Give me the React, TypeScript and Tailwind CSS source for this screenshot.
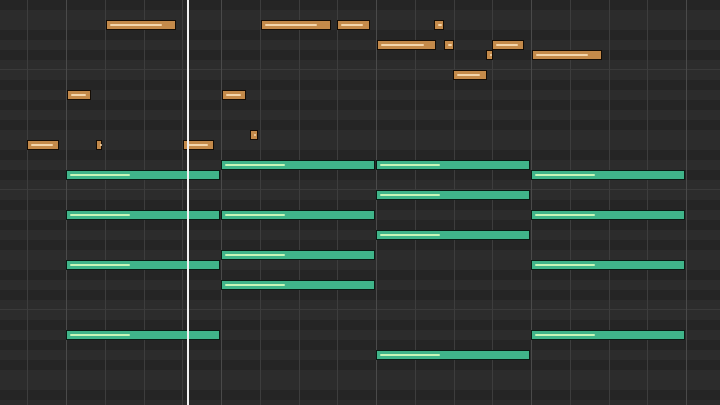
const BEAT = 38.75;
const X0 = 27.8;

type Note = { x: number; y: number; w: number };

// orange (melody) notes, pixel coords
const leads: Note[] = [
  { x: 105.5, y: 20, w: 70.5 },
  { x: 260.8, y: 20, w: 70 },
  { x: 337.3, y: 20, w: 32.5 },
  { x: 434.3, y: 20, w: 9.5 },
  { x: 376.5, y: 40, w: 59.3 },
  { x: 444.3, y: 40, w: 9.4 },
  { x: 492.3, y: 40, w: 32 },
  { x: 485.7, y: 50, w: 7 },
  { x: 531.7, y: 50, w: 70 },
  { x: 453.3, y: 70, w: 33.4 },
  { x: 66.7, y: 90, w: 24 },
  { x: 221.7, y: 90, w: 24 },
  { x: 250, y: 130, w: 7.5 },
  { x: 27.3, y: 140, w: 32 },
  { x: 95.7, y: 140, w: 6.8 },
  { x: 182.7, y: 140, w: 31.8 },
];

// green (chord) notes: [bar, row y]
const chords: [number, number][] = [
  [0, 170], [0, 210], [0, 260], [0, 330],
  [1, 160], [1, 210], [1, 250], [1, 280],
  [2, 160], [2, 190], [2, 230], [2, 350],
  [3, 170], [3, 210], [3, 260], [3, 330],
];

const blackRow = [true, false, false, true, false, true, false, false, true, false, true, false];

function NoteBlock({ n, kind }: { n: Note; kind: "lead" | "chord" }) {
  const hl = Math.max(2, Math.min(60, n.w * 0.8 - 4));
  const lead = kind === "lead";
  return (
    <div
      className={`absolute h-[10px] border ${
        lead ? "bg-[#c48a4a] border-[#140c04]" : "bg-[#40b58a] border-[#0a1c14]"
      }`}
      style={{ left: n.x, top: n.y, width: n.w }}
    >
      <div
        className={`absolute top-[3px] left-[3px] h-[2px] rounded-full ${
          lead ? "bg-[#f4d6ac]" : "bg-[#c8f7b8]"
        }`}
        style={{ width: hl }}
      />
    </div>
  );
}

export default function App() {
  const rows = Array.from({ length: 41 }, (_, i) => i);
  const lines = Array.from({ length: 18 }, (_, k) => k);

  return (
    <div className="relative w-[720px] h-[405px] overflow-hidden bg-[#2b2b2b]">
      {/* key rows */}
      <div className="flex flex-col">
        {rows.map((i) => (
          <div
            key={i}
            className={`h-[10px] shrink-0 ${
              i % 12 === 6 ? "border-b border-[#3a3a3a]" : ""
            } ${blackRow[i % 12] ? "bg-[#252525]" : "bg-[#2c2c2c]"}`}
          />
        ))}
      </div>

      {/* beat / bar lines */}
      {lines.map((k) => (
        <div
          key={k}
          className={`absolute top-0 h-full w-px ${k % 4 === 1 ? "bg-[#4a4a4a]" : "bg-[#3d3d3d]"}`}
          style={{ left: X0 + BEAT * k - 0.5 }}
        />
      ))}

      {leads.map((n, i) => (
        <NoteBlock key={`l${i}`} n={n} kind="lead" />
      ))}
      {chords.map(([b, y], i) => (
        <NoteBlock
          key={`c${i}`}
          n={{ x: X0 + BEAT * (1 + 4 * b) - 1, y, w: BEAT * 4 - 0.5 }}
          kind="chord"
        />
      ))}

      {/* playhead */}
      <div className="absolute top-0 left-[186.7px] h-full w-[2px] bg-[#f2f2f2]" />
    </div>
  );
}
